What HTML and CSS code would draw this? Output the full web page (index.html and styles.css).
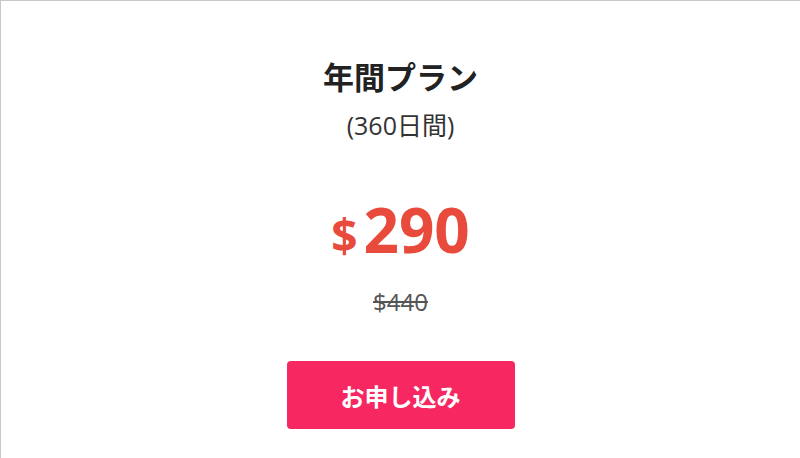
FILE: index.html
```html
<!DOCTYPE html>
<html lang="ja">
<head>
    <meta charset="UTF-8">
    <title>年間プラン</title>
    <link rel="stylesheet" href="styles.css">
</head>
<body>
    <div class="plan">
        <h2 class="plan-title">年間プラン</h2>
        <p class="plan-term">(360日間)</p>
        <div class="price">
            <span class="currency">$</span><span class="amount">290</span>
        </div>
        <p class="old-price">$440</p>
        <a class="apply" href="#">お申し込み</a>
    </div>
</body>
</html>
```

FILE: styles.css
```css
html, body { margin: 0; padding: 0; background: #fff; }
body { font-family: "Open Sans", "Noto Sans CJK JP", sans-serif; color: #222; }
.plan { box-sizing: border-box; width: 800px; height: 458px; border-top: 1px solid #c8c8c8; border-left: 1px solid #c8c8c8; display: flex; flex-direction: column; align-items: center; padding-top: 53px; }
.plan-title { margin: 0; font-family: "Noto Sans CJK JP", sans-serif; font-size: 31px; font-weight: 700; line-height: 44px; color: #222; }
.plan-term { margin: 10px 0 0; font-size: 25px; line-height: 34px; color: #333; }
.price { margin-top: 49px; display: flex; align-items: baseline; color: #e84a3c; font-weight: 700; line-height: 76px; }
.currency { font-size: 46px; margin-right: 6px; }
.amount { font-size: 62px; }
.old-price { margin: 12px 0 0; font-size: 24px; line-height: 34px; color: #555; text-decoration: line-through; }
.apply { margin-top: 42px; width: 228px; height: 68px; display: flex; align-items: center; justify-content: center; background: #f72861; color: #fff; font-family: "Noto Sans CJK JP", sans-serif; font-size: 24px; font-weight: 700; text-decoration: none; border-radius: 4px; }
```
